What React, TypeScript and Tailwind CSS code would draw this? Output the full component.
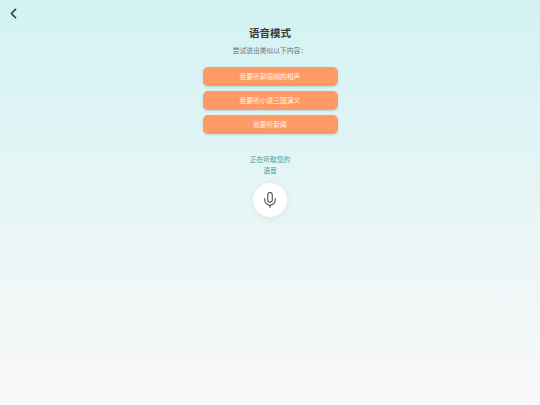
import { ChevronLeft, Mic } from "lucide-react";

const SUGGESTIONS = ["我要听郭德纲的相声", "我要听小说三国演义", "我要听新闻"];

export default function App() {
  return (
    <div className="relative flex h-[405px] w-[540px] flex-col items-center overflow-hidden bg-gradient-to-b from-[#d3f2f3] from-0% to-[#f8f8f8] to-95% font-['Noto_Sans_CJK_SC','Noto_Sans',sans-serif]">
      <button className="absolute left-[5px] top-[5px] text-[#333333]">
        <ChevronLeft className="h-[17px] w-[17px]" strokeWidth={2.25} />
      </button>

      <h1 className="mt-[25px] text-[10.5px] font-bold leading-[16px] text-[#3a3a3a]">语音模式</h1>
      <p className="mt-[3px] text-[6.75px] leading-[12px] text-[#707070]">尝试说出类似以下内容：</p>

      <div className="mt-[11px] flex w-[135px] flex-col gap-[4.75px]">
        {SUGGESTIONS.map((text) => (
          <div
            key={text}
            className="flex h-[19px] items-center justify-center rounded-[5px] bg-[#ff9a66] text-[6.75px] text-[#fff3ea] shadow-sm"
          >
            {text}
          </div>
        ))}
      </div>

      <p className="mt-[20.5px] w-[44px] text-center text-[6.75px] leading-[11px] text-[#3fa596]">正在听取您的语音</p>

      <button className="mt-[6.5px] flex h-[34px] w-[34px] items-center justify-center rounded-full bg-white shadow-[0_1px_6px_rgba(0,0,0,0.08)]">
        <Mic className="h-[18px] w-[18px] text-[#444444]" strokeWidth={1.4} />
      </button>
    </div>
  );
}
